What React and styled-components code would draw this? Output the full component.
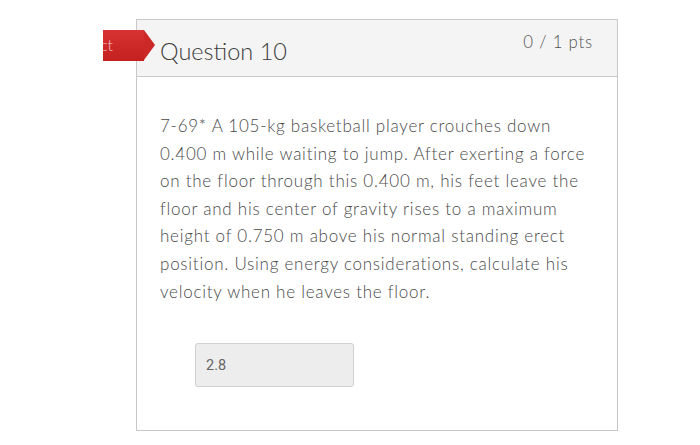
import React from "react";
import styled, { createGlobalStyle } from "styled-components";

const Global = createGlobalStyle`
  html, body { margin: 0; padding: 0; background: #fff; }
  body { font-family: Lato, "Open Sans", sans-serif; }
`;

const Page = styled.div`
  width: 700px;
  height: 445px;
  padding: 19px 0 0 136px;
  box-sizing: border-box;
  overflow: hidden;
`;

const Card = styled.div`
  position: relative;
  width: 482px;
  height: 412px;
  box-sizing: border-box;
  border: 1px solid #c8c8c8;
  display: flex;
  flex-direction: column;
`;

const Header = styled.div`
  height: 57px;
  box-sizing: border-box;
  background: #f4f4f4;
  border-bottom: 1px solid #c8c8c8;
  display: flex;
  justify-content: space-between;
  padding: 0 24px 0 23px;
`;

const Title = styled.h2`
  margin: 0;
  padding-top: 17px;
  font-size: 23.5px;
  font-weight: 300;
  color: #3d3d3d;
  line-height: 29px;
`;

const Points = styled.div`
  padding-top: 12px;
  font-size: 16.8px;
  font-weight: 300;
  color: #555;
  line-height: 20px;
  letter-spacing: 0.8px;
`;

const Tag = styled.div`
  position: absolute;
  left: -34px;
  top: 10px;
  height: 31px;
  display: flex;
`;

const TagBody = styled.div`
  width: 41px;
  height: 31px;
  background: linear-gradient(#d83232, #c42020);
  color: #f0c4c4;
  font-size: 16px;
  font-weight: 300;
  line-height: 29px;
  overflow: hidden;
  display: flex;
  justify-content: flex-end;
  padding-right: 31px;
  box-sizing: border-box;
  white-space: nowrap;
`;

const TagArrow = styled.div`
  width: 0;
  height: 0;
  border-top: 15.5px solid transparent;
  border-bottom: 15.5px solid transparent;
  border-left: 11px solid #cd2828;
`;

const Body = styled.div`
  padding: 35px 24px 0 23px;
`;

const Text = styled.p`
  margin: 0;
  font-size: 17px;
  font-weight: 300;
  line-height: 27.6px;
  letter-spacing: 0.75px;
  color: #4a4a4a;
  max-width: 428px;
`;

const Answer = styled.div`
  margin: 38px 0 0 35px;
  width: 159px;
  height: 44px;
  box-sizing: border-box;
  background: #ededed;
  border: 1px solid #d0d0d0;
  border-radius: 3px;
  font-family: Roboto, "Open Sans", sans-serif;
  font-size: 14.5px;
  color: #666;
  padding: 0 0 0 10px;
  display: flex;
  align-items: center;
`;

export default function App() {
  return (
    <>
      <Global />
      <Page>
        <Card>
          <Header>
            <Title>Question 10</Title>
            <Points>0 / 1 pts</Points>
          </Header>
          <Body>
            <Text>
              7-69* A 105-kg basketball player crouches down 0.400 m while
              waiting to jump. After exerting a force on the floor through this
              0.400 m, his feet leave the floor and his center of gravity rises
              to a maximum height of 0.750 m above his normal standing erect
              position. Using energy considerations, calculate his velocity
              when he leaves the floor.
            </Text>
            <Answer>2.8</Answer>
          </Body>
          <Tag>
            <TagBody>Incorrect</TagBody>
            <TagArrow />
          </Tag>
        </Card>
      </Page>
    </>
  );
}
